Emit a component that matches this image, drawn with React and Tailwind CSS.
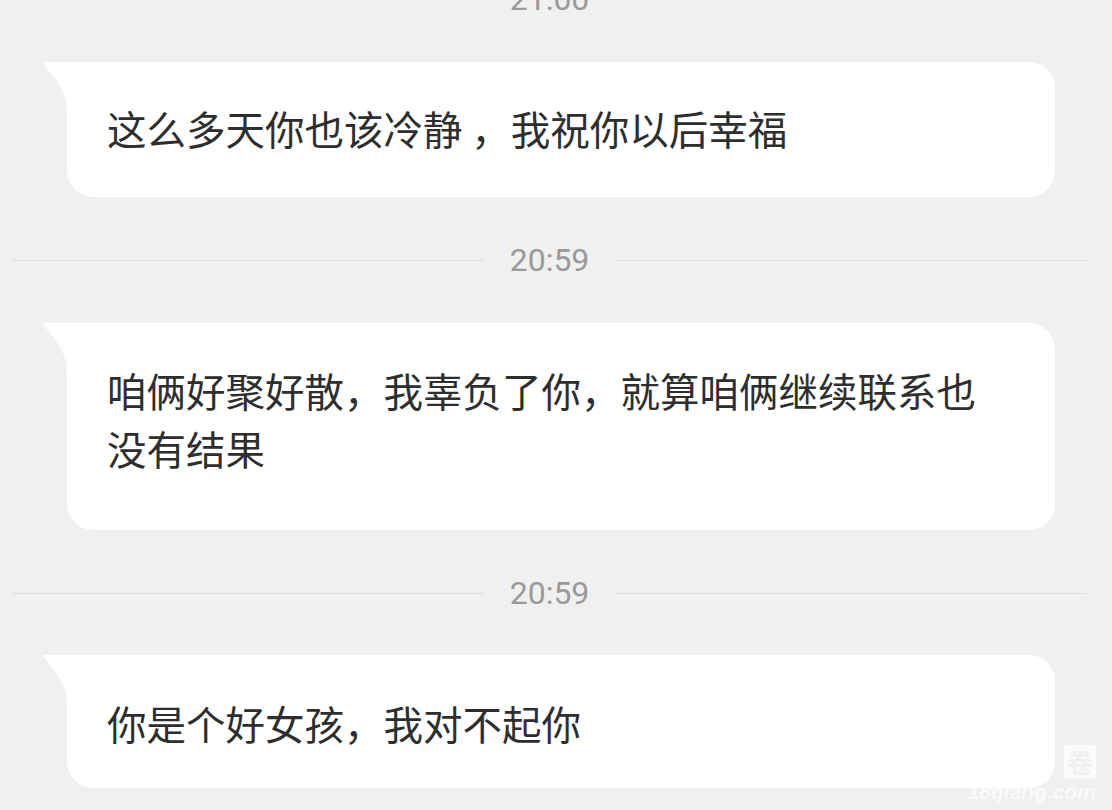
import React from "react";

function TimeRow({ time, className = "" }) {
  return (
    <div className={`flex items-center h-[40px] ${className}`}>
      <div className="flex-1 h-px bg-[#dcdcdc]" />
      <div
        className="px-[27px] text-[32px] leading-none text-[#9a9a9a]"
        style={{ fontFamily: "Roboto, 'Noto Sans', sans-serif" }}
      >
        {time}
      </div>
      <div className="flex-1 h-px bg-[#dcdcdc]" />
    </div>
  );
}

function Bubble({ children, pad }) {
  return (
    <div className="relative ml-[55px] mr-[32px]">
      <svg
        className="absolute left-[-24px] top-0"
        width="25"
        height="46"
        viewBox="0 0 25 46"
      >
        <path d="M1.5 0 H25 V46 H24 C22 22 5 10 0.3 1.2 Q0 0 1.5 0 Z" fill="#ffffff" />
      </svg>
      <div
        className={`bg-white rounded-tr-[26px] rounded-br-[26px] rounded-bl-[26px] pl-[40px] pr-[60px] text-[39.5px] leading-[58px] text-[#2e2e2e] ${pad}`}
        style={{ fontFamily: "'Noto Sans CJK SC', 'Noto Sans', sans-serif" }}
      >
        {children}
      </div>
    </div>
  );
}

export default function App() {
  return (
    <div className="relative w-full h-[810px] overflow-hidden bg-[#f0f0f0]">
      <div className="flex flex-col pl-[12px] pr-[25px]">
        <TimeRow time="21:00" className="mt-[-21px] mb-[43px]" />
        <Bubble pad="pt-[37px] pb-[40px]">这么多天你也该冷静 ，我祝你以后幸福</Bubble>
        <TimeRow time="20:59" className="my-[43px]" />
        <Bubble pad="pt-[38px] pb-[53px]">
          咱俩好聚好散，我辜负了你，就算咱俩继续联系也没有结果
        </Bubble>
        <TimeRow time="20:59" className="mt-[43px] mb-[42px]" />
        <Bubble pad="pt-[39px] pb-[36px]">你是个好女孩，我对不起你</Bubble>
      </div>

      {/* watermark */}
      <div className="absolute right-[16px] top-[745px] w-[32px] h-[34px] bg-white/70 flex items-center justify-center">
        <span
          className="text-[26px] leading-none font-bold text-[#f0f0f0]"
          style={{ fontFamily: "'Noto Sans CJK SC', sans-serif" }}
        >
          卷
        </span>
      </div>
      <div
        className="absolute right-[16px] top-[781px] text-[21px] leading-none font-bold italic text-white/70"
        style={{ fontFamily: "'Liberation Sans', Arial, sans-serif" }}
      >
        18qiang.com
      </div>
    </div>
  );
}
